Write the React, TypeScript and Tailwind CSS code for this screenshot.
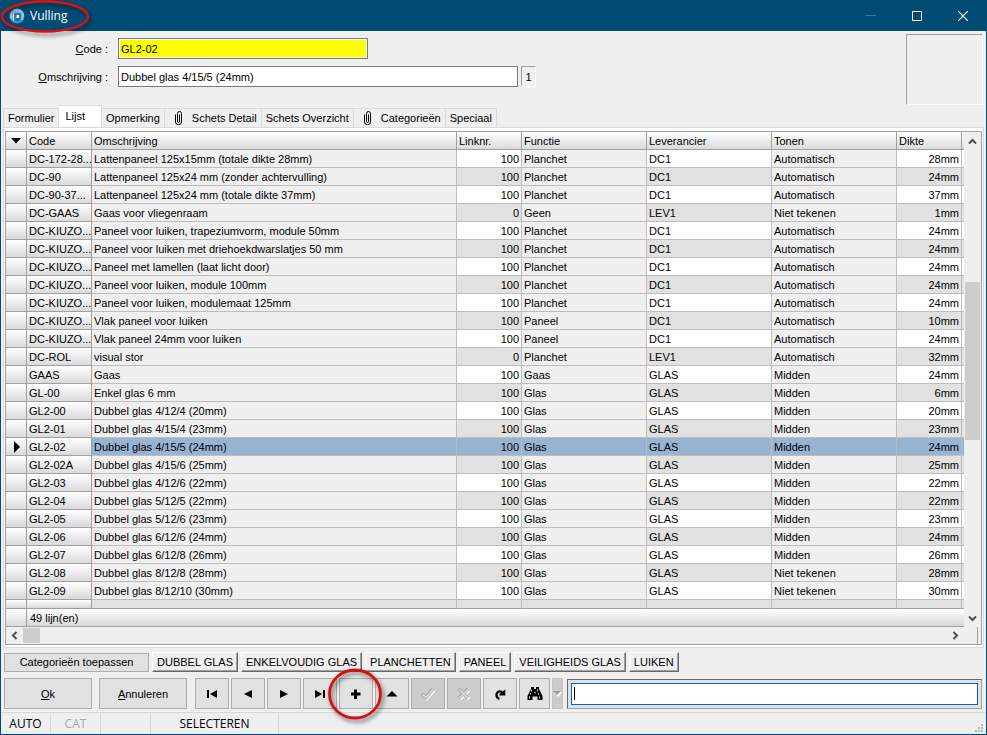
import { useState } from "react";
import type { ReactNode } from "react";
import clsx from "clsx";

type Row = {
  code: string;
  desc: string;
  link: number;
  functie: string;
  leverancier: string;
  tonen: string;
  dikte: string;
};

const row = (
  code: string,
  desc: string,
  link: number,
  functie: string,
  leverancier: string,
  tonen: string,
  dikte: string
): Row => ({ code, desc, link, functie, leverancier, tonen, dikte });

const rows: Row[] = [
  row("DC-172-28...", "Lattenpaneel 125x15mm (totale dikte 28mm)", 100, "Planchet", "DC1", "Automatisch", "28mm"),
  row("DC-90", "Lattenpaneel 125x24 mm (zonder achtervulling)", 100, "Planchet", "DC1", "Automatisch", "24mm"),
  row("DC-90-37...", "Lattenpaneel 125x24 mm (totale dikte 37mm)", 100, "Planchet", "DC1", "Automatisch", "37mm"),
  row("DC-GAAS", "Gaas voor vliegenraam", 0, "Geen", "LEV1", "Niet tekenen", "1mm"),
  row("DC-KIUZO...", "Paneel voor luiken, trapeziumvorm, module 50mm", 100, "Planchet", "DC1", "Automatisch", "24mm"),
  row("DC-KIUZO...", "Paneel voor luiken met driehoekdwarslatjes 50 mm", 100, "Planchet", "DC1", "Automatisch", "24mm"),
  row("DC-KIUZO...", "Paneel met lamellen (laat licht door)", 100, "Planchet", "DC1", "Automatisch", "24mm"),
  row("DC-KIUZO...", "Paneel voor luiken, module 100mm", 100, "Planchet", "DC1", "Automatisch", "24mm"),
  row("DC-KIUZO...", "Paneel voor luiken, modulemaat 125mm", 100, "Planchet", "DC1", "Automatisch", "24mm"),
  row("DC-KIUZO...", "Vlak paneel voor luiken", 100, "Paneel", "DC1", "Automatisch", "10mm"),
  row("DC-KIUZO...", "Vlak paneel 24mm voor luiken", 100, "Paneel", "DC1", "Automatisch", "24mm"),
  row("DC-ROL", "visual stor", 0, "Planchet", "LEV1", "Automatisch", "32mm"),
  row("GAAS", "Gaas", 100, "Gaas", "GLAS", "Midden", "24mm"),
  row("GL-00", "Enkel glas 6 mm", 100, "Glas", "GLAS", "Midden", "6mm"),
  row("GL2-00", "Dubbel glas 4/12/4 (20mm)", 100, "Glas", "GLAS", "Midden", "20mm"),
  row("GL2-01", "Dubbel glas 4/15/4 (23mm)", 100, "Glas", "GLAS", "Midden", "23mm"),
  row("GL2-02", "Dubbel glas 4/15/5 (24mm)", 100, "Glas", "GLAS", "Midden", "24mm"),
  row("GL2-02A", "Dubbel glas 4/15/6 (25mm)", 100, "Glas", "GLAS", "Midden", "25mm"),
  row("GL2-03", "Dubbel glas 4/12/6 (22mm)", 100, "Glas", "GLAS", "Midden", "22mm"),
  row("GL2-04", "Dubbel glas 5/12/5 (22mm)", 100, "Glas", "GLAS", "Midden", "22mm"),
  row("GL2-05", "Dubbel glas 5/12/6 (23mm)", 100, "Glas", "GLAS", "Midden", "23mm"),
  row("GL2-06", "Dubbel glas 6/12/6 (24mm)", 100, "Glas", "GLAS", "Midden", "24mm"),
  row("GL2-07", "Dubbel glas 6/12/8 (26mm)", 100, "Glas", "GLAS", "Midden", "26mm"),
  row("GL2-08", "Dubbel glas 8/12/8 (28mm)", 100, "Glas", "GLAS", "Niet tekenen", "28mm"),
  row("GL2-09", "Dubbel glas 8/12/10 (30mm)", 100, "Glas", "GLAS", "Niet tekenen", "30mm"),
];

const tabs = [
  { label: "Formulier" },
  { label: "Lijst" },
  { label: "Opmerking" },
  { label: "Schets Detail", clip: true },
  { label: "Schets Overzicht" },
  { label: "Categorieën", clip: true },
  { label: "Speciaal" },
];

const categories = ["DUBBEL GLAS", "ENKELVOUDIG GLAS", "PLANCHETTEN", "PANEEL", "VEILIGHEIDS GLAS", "LUIKEN"];

const HEAD = "border-r border-b border-[#a0a0a0] bg-linear-to-b from-white to-[#dadada] px-[2px] text-left font-normal";

function PaperClip() {
  return (
    <svg width="10" height="14" viewBox="0 0 10 14" fill="none" stroke="#000" aria-hidden="true">
      <path d="M6.5 3.5v7a1 1 0 0 1-2 0v-8a2 2 0 0 1 4 0v8.500a2.800 2.500 0 0 1-6 0V3.500" />
    </svg>
  );
}

function Chevron({ d }: { d: string }) {
  return (
    <svg width="9" height="9" viewBox="0 0 9 9" fill="none" stroke="#505050" strokeWidth="2" aria-hidden="true">
      <path d={d} />
    </svg>
  );
}

function AppLogo() {
  return (
    <svg width="16" height="16" viewBox="0 0 16 16" aria-hidden="true">
      <circle cx="8" cy="8" r="7.500" fill="#3f8fc2" />
      <path d="M2 4Q5 .5 9 .8q5 .8 6 6l-1 5V3.500H3.500v9L1.300 10Q0 7 2 4z" fill="#b4cbdc" />
      <path d="M4.500 13V4h8.500v8.500" fill="#2b7fb5" stroke="#dfeaf2" />
      <path d="M7 13V7h3.500v6" fill="#1d6ea5" />
      <rect x="7.500" y="7" width="2.500" height="3" fill="#fff" />
    </svg>
  );
}

type ToolProps = { label: string; disabled?: boolean; children: ReactNode };

function ToolButton({ label, disabled, children }: ToolProps) {
  return (
    <button
      type="button"
      aria-label={label}
      disabled={disabled}
      className={clsx(
        "flex h-[31px] w-[34px] items-center justify-center border border-[#adadad]",
        disabled ? "bg-[#cccccc]" : "bg-[#e1e1e1]"
      )}
    >
      {children}
    </button>
  );
}

function Glyph({ children }: { children: ReactNode }) {
  return (
    <svg width="16" height="16" viewBox="0 0 16 16" aria-hidden="true">
      {children}
    </svg>
  );
}

function TitleBar() {
  return (
    <header className="relative flex h-[31px] items-center bg-[#004c74] pl-[9px] text-white">
      <AppLogo />
      <h1 className="ml-[5px] flex-1 font-['Open_Sans',sans-serif] text-[12px]">Vulling</h1>
      <button type="button" aria-label="Minimaliseren" className="flex h-[31px] w-[46px] items-center justify-center">
        <svg width="11" height="11" viewBox="0 0 11 11">
          <path d="M0 5.500h10" stroke="#3e7799" />
        </svg>
      </button>
      <button type="button" aria-label="Maximaliseren" className="flex h-[31px] w-[46px] items-center justify-center">
        <svg width="10" height="10" viewBox="0 0 10 10">
          <path d="M.5.5h9v9h-9z" fill="none" stroke="#fff" />
        </svg>
      </button>
      <button type="button" aria-label="Sluiten" className="mr-px flex h-[31px] w-[46px] items-center justify-center">
        <svg width="10" height="10" viewBox="0 0 10 10">
          <path d="M0 0l10 10M10 0L0 10" stroke="#fff" strokeWidth="1.200" />
        </svg>
      </button>
      {/* red marker round the window name */}
      <svg
        className="pointer-events-none absolute top-0 left-0 z-10 drop-shadow-[2px_3px_2px_rgba(0,0,0,0.5)]"
        width="96"
        height="40"
        viewBox="0 0 96 40"
        aria-hidden="true"
      >
        <ellipse cx="45" cy="16.500" rx="43" ry="15" fill="none" stroke="#e01010" strokeWidth="2.400" />
      </svg>
    </header>
  );
}

function Header() {
  return (
    <div className="flex h-[75px] justify-between pt-[3px] pr-[3px]">
      <div className="flex flex-col gap-[7px] pt-1">
        <div className="flex items-center">
          <label htmlFor="code" className="w-[107px] text-right">
            <u>C</u>ode :
          </label>
          <input
            id="code"
            defaultValue="GL2-02"
            className="ml-[10px] h-[21px] w-[250px] border border-[#7a7a7a] bg-[#ffff00] px-[2px] shadow-[inset_0_0_0_1px_#fff] outline-none"
          />
        </div>
        <div className="flex items-center">
          <label htmlFor="omschrijving" className="w-[107px] text-right">
            <u>O</u>mschrijving :
          </label>
          <input
            id="omschrijving"
            defaultValue="Dubbel glas 4/15/5 (24mm)"
            className="ml-[10px] h-[21px] w-[400px] border border-[#7a7a7a] bg-white px-[2px] outline-none"
          />
          <span className="ml-[3px] flex h-[21px] w-[15px] items-center justify-center border border-t-[#a0a0a0] border-r-white border-b-white border-l-[#a0a0a0]">
            1
          </span>
        </div>
      </div>
      <div className="h-[71px] w-[77px] border border-t-[#a0a0a0] border-r-white border-b-white border-l-[#a0a0a0]" />
    </div>
  );
}

function TabStrip({ active, onSelect }: { active: string; onSelect: (label: string) => void }) {
  return (
    <div role="tablist" className="flex h-[21px] items-end pl-[2px]">
      {tabs.map(({ label, clip }) => {
        const selected = label === active;
        return (
          <button
            key={label}
            type="button"
            role="tab"
            aria-selected={selected}
            onClick={() => onSelect(label)}
            className={clsx(
              "flex shrink-0 items-center border-t border-r border-[#dadada] first:border-l",
              selected ? "h-[22px] bg-white pr-4 pb-[2px] pl-[6px]" : "h-[19px]",
              clip ? "gap-[9px] pr-1 pl-2" : !selected && "px-1"
            )}
          >
            {clip && <PaperClip />}
            {label}
          </button>
        );
      })}
    </div>
  );
}

function Grid() {
  const [current, setCurrent] = useState("GL2-02");

  return (
    <table className="w-full table-fixed border-separate border-spacing-0 whitespace-nowrap">
      <colgroup>
        <col className="w-[21px]" />
        <col className="w-[65px]" />
        <col />
        <col className="w-[65px]" />
        <col className="w-[125px]" />
        <col className="w-[125px]" />
        <col className="w-[125px]" />
        <col className="w-[65px]" />
        <col className="w-[2px]" />
      </colgroup>
      <thead>
        <tr className="h-[18px]">
          <th className={HEAD} aria-label="Sortering">
            <svg width="16" height="10" viewBox="0 0 16 10" aria-hidden="true">
              <path d="M3 2h10L8 7.500z" />
            </svg>
          </th>
          <th className={HEAD}>Code</th>
          <th className={HEAD}>Omschrijving</th>
          <th className={HEAD}>Linknr.</th>
          <th className={HEAD}>Functie</th>
          <th className={HEAD}>Leverancier</th>
          <th className={HEAD}>Tonen</th>
          <th className={HEAD}>Dikte</th>
          <th className="border-b border-[#a0a0a0] bg-linear-to-b from-white to-[#dadada]" />
        </tr>
      </thead>
      <tbody>
        {rows.map((r, i) => {
          const selected = r.code === current;
          const cell = "border-r border-b border-[#bdbdbd] px-[2px]";
          const fixed = clsx(cell, selected ? "bg-[#99b4d1]" : "bg-[#efefef]");
          const edit = clsx(cell, selected ? "bg-[#99b4d1]" : i % 2 ? "bg-[#e1e1e1]" : "bg-white");
          return (
            <tr key={i} className="h-[18px]" onClick={() => setCurrent(r.code)}>
              <td className={HEAD}>
                {selected && (
                  <svg className="ml-[5px]" width="8" height="12" viewBox="0 0 8 12" aria-hidden="true">
                    <path d="M1 0l6 6-6 6z" />
                  </svg>
                )}
              </td>
              <td className={HEAD}>{r.code}</td>
              <td className={fixed}>{r.desc}</td>
              <td className={clsx(edit, "text-right")}>{r.link}</td>
              <td className={fixed}>{r.functie}</td>
              <td className={edit}>{r.leverancier}</td>
              <td className={fixed}>{r.tonen}</td>
              <td className={clsx(edit, "text-right")}>{r.dikte}</td>
              <td
                className={clsx(
                  "border-b border-[#bdbdbd]",
                  selected ? "bg-[#99b4d1]" : i % 2 ? "bg-[#e1e1e1]" : "bg-white"
                )}
              />
            </tr>
          );
        })}
        {/* next record, cut off by the footer */}
        <tr className="h-[9px]">
          <td className={HEAD} />
          <td className={HEAD} />
          {[0, 1, 2, 3, 4, 5].map((n) => (
            <td key={n} className="border-r border-b border-r-[#bdbdbd] border-b-[#a0a0a0] bg-[#e1e1e1]" />
          ))}
          <td className="border-b border-[#a0a0a0] bg-[#e1e1e1]" />
        </tr>
      </tbody>
      <tfoot>
        <tr className="h-[18px]">
          <td className={HEAD} />
          <td colSpan={8} className="border-b border-[#a0a0a0] bg-linear-to-b from-white to-[#d6d6d6] px-[3px]">
            49 lijn(en)
          </td>
        </tr>
      </tfoot>
    </table>
  );
}

function ListPanel() {
  return (
    <div className="mx-[2px] border border-[#dadada] bg-white px-px pt-[3px] pb-[2px]">
      <div className="border border-[#a0a0a0] bg-[#efefef]">
        <div className="flex">
          <div className="min-w-0 flex-1">
            <Grid />
          </div>
          <div className="flex w-[17px] flex-col items-center px-px">
            <div className="flex h-[18px] items-center">
              <Chevron d="M1 6.500l3.500-3.500L8 6.500" />
            </div>
            <div className="flex w-full flex-1 flex-col">
              <div className="flex-[132]" />
              <div className="flex-[158] bg-[#cdcdcd]" />
              <div className="flex-[169]" />
            </div>
            <div className="flex h-[18px] items-center">
              <Chevron d="M1 2.500l3.500 3.500L8 2.500" />
            </div>
          </div>
        </div>
        <div className="flex h-[17px] items-center pr-[3px] pl-1">
          <Chevron d="M6.500 1L3 4.500L6.500 8" />
          <div className="ml-1 h-[15px] w-[17px] bg-[#cdcdcd]" />
          <div className="flex-1" />
          <Chevron d="M2.500 1L6 4.500L2.500 8" />
          <div className="ml-[17px] h-[17px] w-px bg-[#a0a0a0]" />
        </div>
      </div>
    </div>
  );
}

function CategoryBar() {
  return (
    <div className="flex items-center gap-[3px] pl-[3px]">
      <button type="button" className="h-[19px] w-[145px] border border-[#adadad] bg-[#e1e1e1]">
        Categorieën toepassen
      </button>
      {categories.map((name) => (
        <button
          key={name}
          type="button"
          className="h-5 border border-t-white border-r-[#696969] border-b-[#696969] border-l-white px-1 shadow-[inset_-1px_-1px_0_#a0a0a0]"
        >
          {name}
        </button>
      ))}
    </div>
  );
}

function Toolbar() {
  return (
    <div className="flex items-center pr-1 pl-[3px]">
      <button type="button" className="h-[31px] w-[88px] border border-[#adadad] bg-[#e1e1e1]">
        <u>O</u>k
      </button>
      <button type="button" className="ml-[7px] h-[31px] w-[88px] border border-[#adadad] bg-[#e1e1e1]">
        <u>A</u>nnuleren
      </button>
      <div className="ml-2 flex gap-[2px]">
        <ToolButton label="Eerste">
          <Glyph>
            <path d="M3 4h2v8H3zM13 4v8L6 8z" />
          </Glyph>
        </ToolButton>
        <ToolButton label="Vorige">
          <Glyph>
            <path d="M12 4v8L4 8z" />
          </Glyph>
        </ToolButton>
        <ToolButton label="Volgende">
          <Glyph>
            <path d="M4 4v8l8-4z" />
          </Glyph>
        </ToolButton>
        <ToolButton label="Laatste">
          <Glyph>
            <path d="M3 4v8l7-4zM11 4h2v8h-2z" />
          </Glyph>
        </ToolButton>
        <div className="relative">
          <ToolButton label="Toevoegen">
            <Glyph>
              <path d="M6 3.500h3v3h3.500v3H9v3.500H6V9.500H3v-3h3z" />
            </Glyph>
          </ToolButton>
          {/* red marker round the add button */}
          <svg
            className="pointer-events-none absolute -top-3 -left-3 z-10 drop-shadow-[2px_3px_2px_rgba(0,0,0,0.5)]"
            width="60"
            height="60"
            viewBox="0 0 60 60"
            aria-hidden="true"
          >
            <ellipse cx="28" cy="28" rx="25.500" ry="24" fill="none" stroke="#d41414" strokeWidth="2.800" />
          </svg>
        </div>
        <ToolButton label="Bewerken">
          <Glyph>
            <path d="M8 5l5.500 5.500h-11z" />
          </Glyph>
        </ToolButton>
        <ToolButton label="Opslaan" disabled>
          <Glyph>
            <path d="M3 9l3.500 3.500L14 4" fill="none" stroke="#fff" strokeWidth="3.500" />
            <path d="M2 8l3.800 3.500L13 3" fill="none" stroke="#a0a0a0" strokeWidth="3.500" />
            <path d="M2.500 8.500l3.300 3L13 3.500" fill="none" stroke="#d6d6d6" strokeWidth="2" />
          </Glyph>
        </ToolButton>
        <ToolButton label="Annuleer wijziging" disabled>
          <Glyph>
            <path d="M4 4l9 9M13 4l-9 9" fill="none" stroke="#fff" strokeWidth="3.500" />
            <path d="M3 3l9 9M12 3l-9 9" fill="none" stroke="#a0a0a0" strokeWidth="3.500" />
            <path d="M3.500 3.500l8.500 8.500M12 3.500L3.500 12" fill="none" stroke="#d6d6d6" strokeWidth="2" />
          </Glyph>
        </ToolButton>
        <ToolButton label="Vernieuwen">
          <Glyph>
            <path d="M7.500 12.500H6.500A3.300 3.700 0 1 1 10.500 7" fill="none" stroke="#000" strokeWidth="2.400" />
            <path d="M13.300 3.500V9.500H7.500V8z" />
          </Glyph>
        </ToolButton>
        <button
          type="button"
          aria-label="Zoeken"
          className="flex h-[31px] w-[31px] items-center justify-center border border-[#adadad] bg-[#e1e1e1]"
        >
          <Glyph>
            <path d="M4 1h3v2h2V1h3v2l2 4 1.500 3v4h-5v-3.500h-5V14H.5v-4L2 7l2-4z" />
            <path d="M4.500 3.500v2M3.500 7v1.500M2.500 10.500v2M10.500 3.500v2M11.500 7v1.500M12.500 10.500v2M8 5.500v2" stroke="#e1e1e1" />
          </Glyph>
        </button>
        <button
          type="button"
          aria-label="Zoekopties"
          className="flex h-[31px] w-[11px] items-center justify-center border border-[#c4c4c4] bg-[#cccccc]"
        >
          <svg width="9" height="6" viewBox="0 0 9 6" className="shrink-0" aria-hidden="true">
            <path d="M1 1h8L5 6z" fill="#fff" />
            <path d="M0 0h8L4 4z" fill="#9a9a9a" />
          </svg>
        </button>
      </div>
      <div className="ml-[4px] flex-1 border border-t-[#696969] border-r-[#a0a0a0] border-b-[#a0a0a0] border-l-[#696969] bg-[#e1e1e1] p-[3px]">
        <div className="flex h-[22px] items-center border border-[#0067b8] bg-white pl-[2px]">
          <span className="h-[13px] w-px bg-black" />
          <input aria-label="Zoektekst" className="h-full min-w-0 flex-1 outline-none" />
        </div>
      </div>
    </div>
  );
}

function StatusBar() {
  return (
    <footer className="mt-[3px] flex flex-1 items-center border-t border-[#d7d7d7] text-center font-['Open_Sans',sans-serif] text-[12px] leading-[20px]">
      <span className="w-[50px] border-r border-[#d7d7d7]">AUTO</span>
      <span className="w-[50px] border-r border-[#d7d7d7] text-[#a8a8a8]">CAT</span>
      <span className="h-5 w-[50px] border-r border-[#d7d7d7]" />
      <span className="w-[128px] border-r border-[#d7d7d7]">SELECTEREN</span>
      <span className="flex-1" />
      <svg className="mr-px self-end" width="10" height="10" viewBox="0 0 10 10" fill="#b4b4b4" aria-hidden="true">
        <path d="M6 0h2v2H6zM3 3h2v2H3zM6 3h2v2H6zM0 6h2v2H0zM3 6h2v2H3zM6 6h2v2H6z" />
      </svg>
    </footer>
  );
}

export default function App() {
  const [tab, setTab] = useState("Lijst");

  return (
    <div className="flex min-h-screen flex-col bg-[#004c74] font-['Liberation_Sans',sans-serif] text-[11px] leading-[16px] text-black">
      <TitleBar />
      <main className="mx-px mb-px flex flex-1 flex-col bg-[#efefef]">
        <Header />
        <TabStrip active={tab} onSelect={setTab} />
        <ListPanel />
        <div className="mt-1 flex flex-col gap-[6px]">
          <CategoryBar />
          <Toolbar />
        </div>
        <StatusBar />
      </main>
    </div>
  );
}
